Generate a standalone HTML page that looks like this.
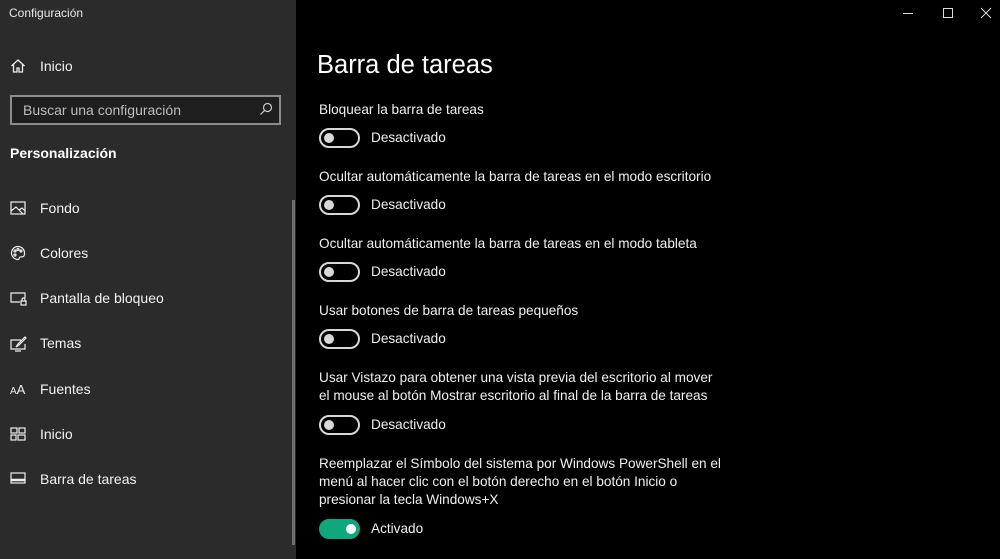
<!DOCTYPE html>
<html><head><meta charset="utf-8"><style>
*{margin:0;padding:0;box-sizing:border-box}
body{width:1000px;height:559px;overflow:hidden;background:#000;font-family:"Liberation Sans",sans-serif;color:#fff;position:relative}
#side{position:absolute;left:0;top:0;width:296px;height:559px;background:#2b2b2b}
.a{position:absolute;white-space:nowrap;line-height:18px}
.si{font-size:14px;left:40px;color:#f2f2f2}
.ic{position:absolute;left:10px}
.lab{font-size:13.6px;left:319px;color:#f0f0f0}
.tg{position:absolute;left:319px;width:41px;height:20px;border:2px solid #d8d8d8;border-radius:10px}
.tg::after{content:"";position:absolute;left:3px;top:3px;width:10px;height:10px;border-radius:50%;background:#d8d8d8}
.tg.on{background:#0fa77d;border-color:#0fa77d}
.tg.on::after{left:25px;background:#fff}
.st{font-size:13.6px;left:371px;color:#f0f0f0}
</style></head><body>
<div id="side">
<div class="a" style="left:9px;top:4px;font-size:12px;color:#e8e8e8">Configuración</div>
<svg class="ic" style="top:58px" width="16" height="16" viewBox="0 0 16 16" fill="none" stroke="#eee" stroke-width="1.3"><path d="M1.5 8 8 2l6.5 6M3.5 6.5V14h3.5V10h2v4h3.5V6.5"/></svg>
<div class="a si" style="top:57px">Inicio</div>
<div style="position:absolute;left:10px;top:95px;width:271px;height:30px;background:#1e1e1e;border:2px solid #8c8c8c"></div>
<div class="a" style="left:23px;top:101px;font-size:14px;color:#bdbdbd">Buscar una configuración</div>
<svg style="position:absolute;left:259px;top:102px" width="14" height="14" viewBox="0 0 14 14" fill="none" stroke="#ccc" stroke-width="1.2"><circle cx="8.5" cy="5.5" r="4"/><path d="M5.5 8.5 1.5 12.5"/></svg>
<div class="a" style="left:10px;top:144px;font-size:14px;font-weight:bold">Personalización</div>
<svg class="ic" style="top:201px" width="16" height="14" viewBox="0 0 16 14" fill="none" stroke="#eee" stroke-width="1.2"><rect x="1" y="1" width="14" height="12"/><path d="M1 10 6 6l7 7M9 9l3-2 3 3"/></svg>
<div class="a si" style="top:199px">Fondo</div>
<svg class="ic" style="top:245px" width="16" height="16" viewBox="0 0 16 16" fill="none" stroke="#eee" stroke-width="1.2"><path d="M8 1.5a6.5 6.5 0 1 0 0 13c1.5 0 1-2 2-2.5s4.5 1 4.5-3.5A6.5 6.5 0 0 0 8 1.5z"/><circle cx="5" cy="6" r="1"/><circle cx="8" cy="4.5" r="1"/><circle cx="11" cy="6" r="1"/><circle cx="5" cy="10" r="1"/></svg>
<div class="a si" style="top:244px">Colores</div>
<svg class="ic" style="top:291px" width="18" height="16" viewBox="0 0 18 16" fill="none" stroke="#eee" stroke-width="1.2"><path d="M10 11H1V2h14v5"/><rect x="11" y="10" width="5" height="4"/><path d="M12 10V8.5a1.5 1.5 0 0 1 3 0V10"/></svg>
<div class="a si" style="top:289px">Pantalla de bloqueo</div>
<svg class="ic" style="top:336px" width="18" height="16" viewBox="0 0 18 16" fill="none" stroke="#eee" stroke-width="1.2"><path d="M11 4H1v9h14V8M5 15h6"/><path d="M6 11l2-3 7-7 1 1-7 7z"/></svg>
<div class="a si" style="top:334px">Temas</div>
<div class="a" style="left:10px;top:381px;font-size:10px;color:#eee">A<span style="font-size:13px">A</span></div>
<div class="a si" style="top:380px">Fuentes</div>
<svg class="ic" style="top:427px" width="16" height="14" viewBox="0 0 16 14" fill="none" stroke="#eee" stroke-width="1.2"><rect x="1" y="1" width="6" height="5"/><rect x="9" y="1" width="6" height="5"/><rect x="1" y="8" width="5" height="5"/><rect x="8" y="8" width="7" height="5"/></svg>
<div class="a si" style="top:425px">Inicio</div>
<svg class="ic" style="top:472px" width="16" height="12" viewBox="0 0 16 12" fill="none" stroke="#eee" stroke-width="1.2"><rect x="1" y="1" width="14" height="10"/><path d="M1 8h14" stroke-width="2.5"/></svg>
<div class="a si" style="top:470px">Barra de tareas</div>
<div style="position:absolute;left:292px;top:200px;width:3px;height:345px;background:#6f6f6f"></div>
</div>
<svg style="position:absolute;left:895px;top:6px" width="105" height="14" viewBox="0 0 105 14" fill="none" stroke="#ddd" stroke-width="1"><path d="M8 7.5h10"/><rect x="48.5" y="2.5" width="9" height="9"/><path d="M86 2l10 10M96 2 86 12"/></svg>
<div class="a" style="left:317px;top:50px;font-size:25.5px;line-height:30px">Barra de tareas</div>
<div class="a lab" style="top:101px">Bloquear la barra de tareas</div>
<div class="tg" style="top:128px"></div><div class="a st" style="top:129px">Desactivado</div>
<div class="a lab" style="top:168px">Ocultar automáticamente la barra de tareas en el modo escritorio</div>
<div class="tg" style="top:195px"></div><div class="a st" style="top:196px">Desactivado</div>
<div class="a lab" style="top:235px">Ocultar automáticamente la barra de tareas en el modo tableta</div>
<div class="tg" style="top:262px"></div><div class="a st" style="top:263px">Desactivado</div>
<div class="a lab" style="top:302px">Usar botones de barra de tareas pequeños</div>
<div class="tg" style="top:329px"></div><div class="a st" style="top:330px">Desactivado</div>
<div class="a lab" style="top:369px">Usar Vistazo para obtener una vista previa del escritorio al mover</div>
<div class="a lab" style="top:387px">el mouse al botón Mostrar escritorio al final de la barra de tareas</div>
<div class="tg" style="top:415px"></div><div class="a st" style="top:416px">Desactivado</div>
<div class="a lab" style="top:455px">Reemplazar el Símbolo del sistema por Windows PowerShell en el</div>
<div class="a lab" style="top:473px">menú al hacer clic con el botón derecho en el botón Inicio o</div>
<div class="a lab" style="top:491px">presionar la tecla Windows+X</div>
<div class="tg on" style="top:519px"></div><div class="a st" style="top:520px">Activado</div>
</body></html>
